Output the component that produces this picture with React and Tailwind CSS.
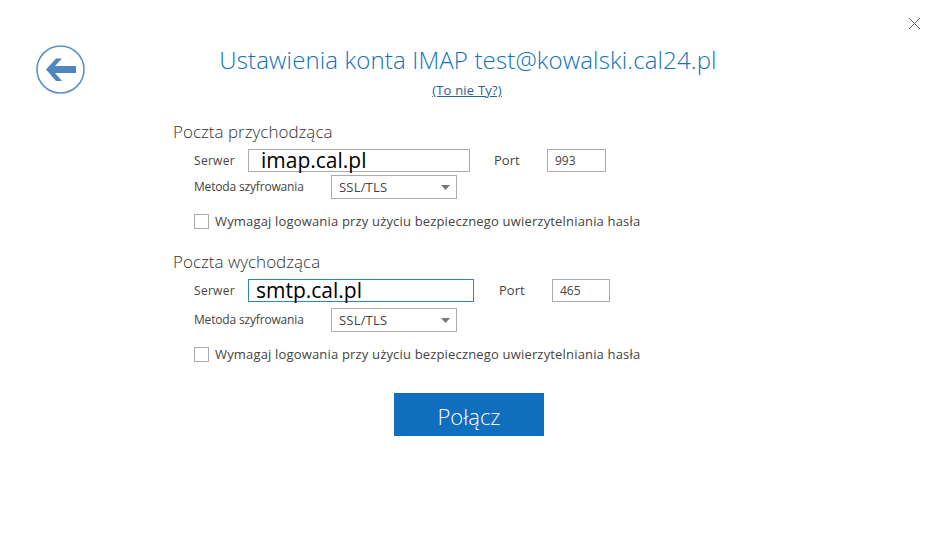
import React from "react";

const ServerSection = ({ title, server, port, inputClass, serverText, portClass, portInput, selectGap, className }) => (
    <section className={className}>
        <h2 className="text-[17px] font-light leading-[22px] text-[#333]">{title}</h2>
        <div className="ml-[21px] mt-[6px]">
            <div className="flex items-center h-[23px]">
                <label className="w-[54px] text-[12px] text-[#444] tracking-[0.3px]">Serwer</label>
                <div className={`h-[23px] border flex items-center ${inputClass}`}>
                    <span className={`text-[21px] leading-none text-black ${serverText}`}>{server}</span>
                </div>
                <label className={`w-[53px] text-[13px] text-[#444] ${portClass}`}>Port</label>
                <div className={`h-[23px] border border-[#ababab] flex items-center pl-[7px] text-[12px] text-[#444] ${portInput}`}>{port}</div>
            </div>
            <div className={`flex items-center h-[24px] ${selectGap}`}>
                <label className="w-[137px] text-[12px] text-[#444] tracking-[-0.17px]">Metoda szyfrowania</label>
                <div className="w-[126px] h-[24px] border border-[#ababab] flex items-center justify-between pl-[7px] pr-[6px] text-[13px] text-[#444]">
                    <span className="tracking-[0.2px] pt-[1px]">SSL/TLS</span>
                    <svg width="9" height="5" viewBox="0 0 9 5"><path d="M0 0h9L4.5 5z" fill="#777" /></svg>
                </div>
            </div>
            <div className="flex items-center mt-[15px] h-[15px]">
                <span className="w-[15px] h-[15px] border border-[#ababab] bg-white" />
                <span className="ml-[6px] pt-[1px] text-[13px] text-[#444] whitespace-nowrap tracking-[0.17px]">Wymagaj logowania przy użyciu bezpiecznego uwierzytelniania hasła</span>
            </div>
        </div>
    </section>
);

export default function App() {
    return (
        <div className="relative w-[936px] h-[560px] bg-white overflow-hidden font-['Open_Sans','Noto_Sans',sans-serif]">
            <button className="absolute right-[15px] top-[17px]" aria-label="Zamknij">
                <svg width="13" height="13" viewBox="0 0 13 13" className="block">
                    <path d="M1 1l11 11M12 1L1 12" stroke="#666" strokeWidth="1" fill="none" />
                </svg>
            </button>
            <button className="absolute left-[36px] top-[45px]" aria-label="Wstecz">
                <svg width="49" height="49" viewBox="0 0 49 49" className="block">
                    <circle cx="24.5" cy="24.5" r="23.5" fill="none" stroke="#5f92c4" strokeWidth="1.6" />
                    <path d="M10 24.5L20 13.5h6L19 21h21v7H19l7 8h-6z" fill="#4f86bd" />
                </svg>
            </button>

            <div className="pt-[43px] text-center">
                <h1 className="text-[24px] font-light leading-[34px] text-[#0f72bf] tracking-[0.14px]">Ustawienia konta IMAP test@kowalski.cal24.pl</h1>
                <a className="block mt-[5px] pr-[2px] text-[13px] leading-[16px] text-[#2c5f94] underline tracking-[0.2px]">(To nie Ty?)</a>
            </div>

            <div className="ml-[173px] mt-[23px]">
                <ServerSection
                    title="Poczta przychodząca"
                    server="imap.cal.pl"
                    port="993"
                    inputClass="w-[222px] border-[#ababab]"
                    serverText="pl-[12px]"
                    portClass="ml-[24px]"
                    portInput="w-[59px]"
                    selectGap="mt-[3px]"
                />
                <ServerSection
                    className="mt-[22px]"
                    title="Poczta wychodząca"
                    server="smtp.cal.pl"
                    port="465"
                    inputClass="w-[226px] border-[#2e86c9]"
                    serverText="pl-[7px]"
                    portClass="ml-[25px]"
                    portInput="w-[58px]"
                    selectGap="mt-[6px]"
                />
                <button className="block ml-[221px] mt-[31px] pt-[3px] w-[150px] h-[43px] bg-[#106ebe] text-white text-[22px] font-light">Połącz</button>
            </div>
        </div>
    );
}
